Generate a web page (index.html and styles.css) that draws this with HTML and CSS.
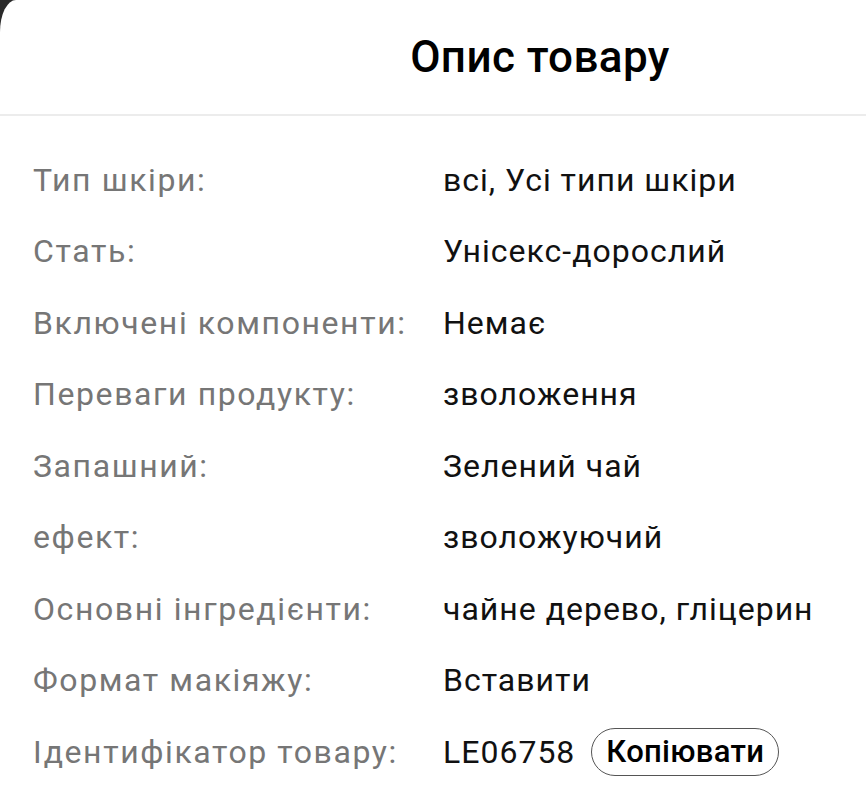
FILE: index.html
```html
<!DOCTYPE html>
<html lang="uk">
<head>
<meta charset="utf-8">
<title>Опис товару</title>
<link rel="stylesheet" href="styles.css">
</head>
<body>
<div class="sheet">
  <header class="sheet-header">
    <h1 class="sheet-title">Опис товару</h1>
  </header>
  <dl class="specs">
    <div class="spec-row"><dt class="spec-label">Тип шкіри:</dt><dd class="spec-value">всі, Усі типи шкіри</dd></div>
    <div class="spec-row"><dt class="spec-label">Стать:</dt><dd class="spec-value">Унісекс-дорослий</dd></div>
    <div class="spec-row"><dt class="spec-label">Включені компоненти:</dt><dd class="spec-value">Немає</dd></div>
    <div class="spec-row"><dt class="spec-label">Переваги продукту:</dt><dd class="spec-value">зволоження</dd></div>
    <div class="spec-row"><dt class="spec-label">Запашний:</dt><dd class="spec-value">Зелений чай</dd></div>
    <div class="spec-row"><dt class="spec-label">ефект:</dt><dd class="spec-value">зволожуючий</dd></div>
    <div class="spec-row"><dt class="spec-label">Основні інгредієнти:</dt><dd class="spec-value">чайне дерево, гліцерин</dd></div>
    <div class="spec-row"><dt class="spec-label">Формат макіяжу:</dt><dd class="spec-value">Вставити</dd></div>
    <div class="spec-row"><dt class="spec-label">Ідентифікатор товару:</dt><dd class="spec-value"><span>LE06758</span><button class="copy-btn" type="button">Копіювати</button></dd></div>
  </dl>
</div>
</body>
</html>
```

FILE: styles.css
```css
* { box-sizing: border-box; }
html, body { margin: 0; padding: 0; }
body {
  background: #2a2a2a;
  font-family: Roboto, "Noto Sans", "Liberation Sans", sans-serif;
  height: 795px;
  overflow: hidden;
}
.sheet {
  background: #ffffff;
  border-top-left-radius: 16px 32px;
  min-height: 795px;
}
.sheet-header {
  height: 116px;
  border-bottom: 2px solid #ececec;
  display: flex;
  align-items: center;
  justify-content: center;
  padding-left: 214px;
}
.sheet-title {
  margin: 0;
  font-size: 44px;
  font-weight: 500;
  color: #000;
  letter-spacing: 0.4px;
}
.specs {
  margin: 0;
  padding: 28px 0 0 33px;
}
.spec-row {
  display: grid;
  grid-template-columns: 410px 1fr;
  align-items: center;
  height: 71.5px;
}
.spec-label {
  margin: 0;
  font-size: 32px;
  letter-spacing: 1.6px;
  color: #767676;
  white-space: nowrap;
}
.spec-value {
  margin: 0;
  font-size: 32px;
  letter-spacing: 1px;
  color: #111;
  display: flex;
  align-items: center;
  white-space: nowrap;
}
.copy-btn {
  font-family: inherit;
  font-size: 31px;
  font-weight: 500;
  letter-spacing: 0.3px;
  color: #000;
  background: #fff;
  border: 1.5px solid #555;
  border-radius: 24px;
  height: 48px;
  padding: 0 14px;
  margin-left: 16px;
  line-height: 1;
}
```
